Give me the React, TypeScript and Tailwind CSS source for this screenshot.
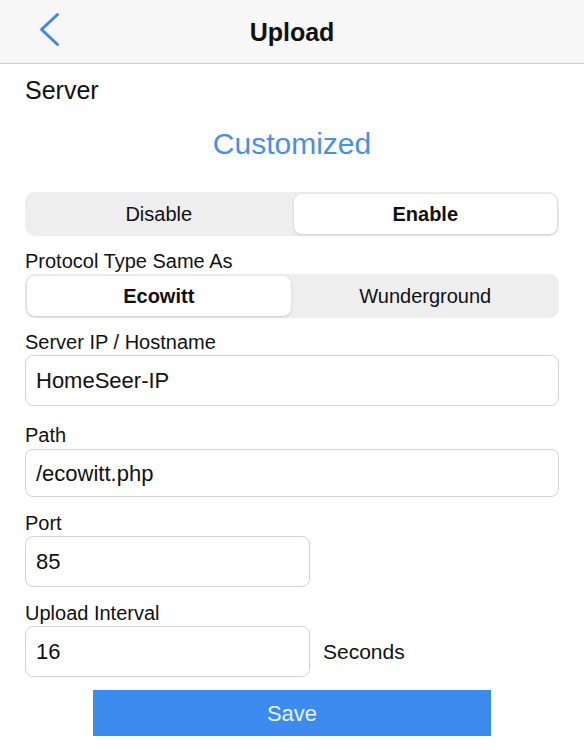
import { useState } from "react";

const Segment = ({
  options,
  value,
  onChange,
  className,
}: {
  options: string[];
  value: number;
  onChange: (i: number) => void;
  className?: string;
}) => (
  <div className={`grid grid-cols-2 gap-[3px] rounded-[10px] bg-[#eeeeef] p-[2px] h-[44px] ${className ?? ""}`}>
    {options.map((opt, i) => (
      <button
        key={opt}
        type="button"
        onClick={() => onChange(i)}
        className={
          value === i
            ? "rounded-[8px] bg-white text-[20px] font-semibold text-[#111] shadow-[0_1px_3px_rgba(0,0,0,0.15)]"
            : "rounded-[8px] text-[20px] text-[#111]"
        }
      >
        {opt}
      </button>
    ))}
  </div>
);

const Field = ({ value, className }: { value: string; className?: string }) => (
  <div
    className={`flex items-center rounded-[8px] border-[1.5px] border-[#d3d3d3] bg-white pl-[10px] text-[22px] text-[#111] ${className ?? ""}`}
  >
    {value}
  </div>
);

const App = () => {
  const [enabled, setEnabled] = useState(1);
  const [protocol, setProtocol] = useState(0);

  return (
    <div className="min-h-[750px] w-[584px] bg-white font-['Liberation_Sans',Arial,sans-serif]">
      {/* Nav bar */}
      <div className="relative flex h-16 items-center justify-center border-b border-[#cfcfcf] bg-[#f7f7f7]">
        <svg
          className="absolute left-[37px] top-[12px]"
          width="26"
          height="36"
          viewBox="0 0 26 36"
          fill="none"
        >
          <path
            d="M20.5 2.5 L4.5 17.5 L20.5 32.5"
            stroke="#3c88e8"
            strokeWidth="3"
            strokeLinecap="round"
            strokeLinejoin="round"
          />
        </svg>
        <h1 className="text-[25px] font-bold leading-7 text-[#111]">Upload</h1>
      </div>

      <div className="px-[25px]">
        <p className="mt-[12px] text-[25px] leading-7 text-[#111]">Server</p>
        <p className="mt-[22px] text-center text-[30px] leading-9 text-[#4a90e2]">Customized</p>

        <Segment
          className="mt-[30px]"
          options={["Disable", "Enable"]}
          value={enabled}
          onChange={setEnabled}
        />

        <p className="mt-[13px] text-[20px] leading-6 text-[#111]">Protocol Type Same As</p>
        <Segment
          className="mt-px"
          options={["Ecowitt", "Wunderground"]}
          value={protocol}
          onChange={setProtocol}
        />

        <p className="mt-[12px] text-[20px] leading-6 text-[#111]">Server IP / Hostname</p>
        <Field className="mt-px h-[51px]" value="HomeSeer-IP" />

        <p className="mt-[17px] text-[20px] leading-6 text-[#111]">Path</p>
        <Field className="mt-[2px] h-[48px]" value="/ecowitt.php" />

        <p className="mt-[14px] text-[20px] leading-6 text-[#111]">Port</p>
        <Field className="mt-px h-[51px] w-[285px]" value="85" />

        <p className="mt-[14px] text-[20px] leading-6 text-[#111]">Upload Interval</p>
        <div className="mt-px flex items-center gap-[13px]">
          <Field className="h-[51px] w-[285px]" value="16" />
          <span className="text-[21px] text-[#111]">Seconds</span>
        </div>

        <div className="mt-[13px] flex justify-center">
          <button
            type="button"
            className="h-[46px] w-[398px] bg-[#3d8bee] text-[22px] text-[#eaf2ff]"
          >
            Save
          </button>
        </div>
      </div>
    </div>
  );
};

export default App;
